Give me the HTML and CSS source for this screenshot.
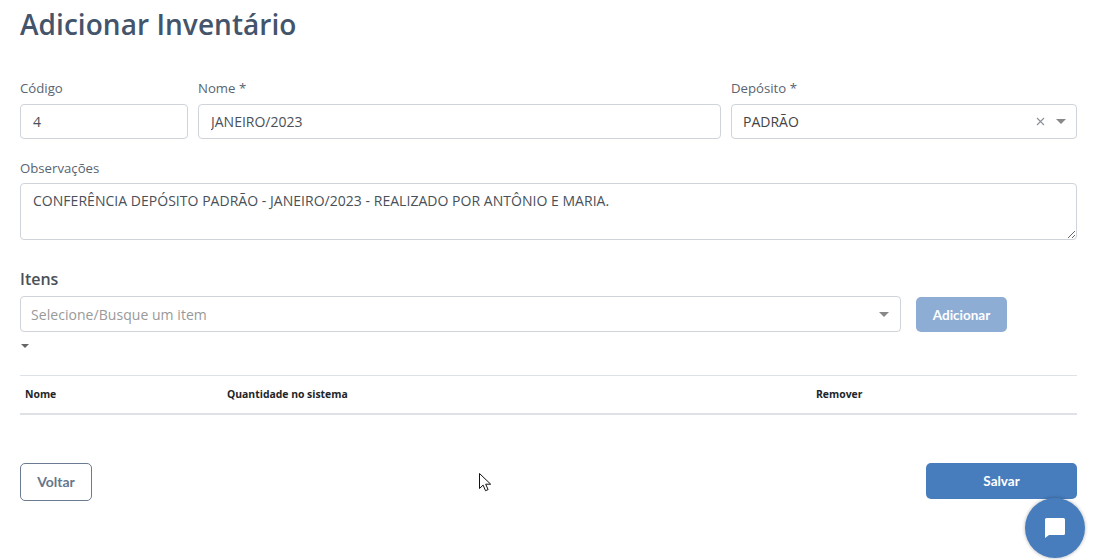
FILE: index.html
```html
<!DOCTYPE html>
<html lang="pt-BR">
<head>
  <meta charset="UTF-8" />
  <title>Adicionar Inventário</title>
  <link rel="stylesheet" href="styles.css">
</head>
<body>
  <main class="container">
    <h1>Adicionar Inventário</h1>

    <div class="form-row">
      <div class="field field-code">
        <label>Código</label>
        <input class="input" type="text" value="4">
      </div>
      <div class="field field-name">
        <label>Nome *</label>
        <input class="input" type="text" value="JANEIRO/2023">
      </div>
      <div class="field field-depot">
        <label>Depósito *</label>
        <div class="select">
          <span class="select-value">PADRÃO</span>
          <svg class="clear-icon" width="9" height="9" viewBox="0 0 9 9"><path d="M1 1l7 7M8 1l-7 7" stroke="#8a9097" stroke-width="1.1" fill="none"/></svg>
          <span class="caret"></span>
        </div>
      </div>
    </div>

    <div class="field field-notes">
      <label>Observações</label>
      <textarea class="input textarea">CONFERÊNCIA DEPÓSITO PADRÃO - JANEIRO/2023 - REALIZADO POR ANTÔNIO E MARIA.</textarea>
    </div>

    <h2>Itens</h2>
    <div class="item-row">
      <div class="select select-item">
        <span class="select-placeholder">Selecione/Busque um item</span>
        <span class="caret"></span>
      </div>
      <button class="btn btn-add">Adicionar</button>
    </div>
    <div class="stray-caret"><span class="caret"></span></div>

    <table class="items">
      <thead>
        <tr>
          <th class="col-name">Nome</th>
          <th class="col-qty">Quantidade no sistema</th>
          <th>Remover</th>
        </tr>
      </thead>
    </table>

    <div class="actions">
      <button class="btn btn-back">Voltar</button>
      <button class="btn btn-save">Salvar</button>
    </div>
  </main>

  <svg class="cursor" width="14" height="21" viewBox="0 0 14 21"><path d="M1.5 1.5v15l3.600-3.400 2.400 5.600 2.600-1.100-2.400-5.400h5z" fill="#fff" stroke="#111" stroke-width="1"/></svg>

  <button class="chat">
    <svg width="20" height="20" viewBox="0 0 20 20"><path d="M1.500 0h17a1.500 1.500 0 0 1 1.500 1.500v14a1.500 1.500 0 0 1-1.500 1.500H4l-4 3V1.500A1.500 1.500 0 0 1 1.500 0z" fill="#fff"/></svg>
  </button>
</body>
</html>
```

FILE: styles.css
```css
* {
  box-sizing: border-box;
  margin: 0;
  padding: 0;
}
html, body {
  height: 560px;
  overflow: hidden;
}
body {
  font-family: 'Open Sans', sans-serif;
  background: white;
  color: #495057;
  position: relative;
}
.container {
  padding: 0 18px 0 20px;
}
h1 {
  font-size: 28px;
  font-weight: 600;
  line-height: 38px;
  letter-spacing: 0.05px;
  color: #44546a;
  padding-top: 5px;
  margin-bottom: 35px;
}
h2 {
  font-size: 16px;
  font-weight: 600;
  line-height: 22px;
  color: #495057;
  margin-top: 28px;
  margin-bottom: 6px;
}
label {
  display: block;
  font-size: 13.200px;
  line-height: 20px;
  margin-bottom: 6px;
  color: #5a6470;
}
.form-row {
  display: flex;
  gap: 10px;
}
.field-code {
  width: 168px;
}
.field-name {
  width: 523px;
}
.field-depot {
  width: 346px;
}
.field-notes {
  margin-top: 19px;
}
.field-notes label {
  margin-bottom: 5px;
}
.input {
  display: block;
  width: 100%;
  height: 35px;
  padding: 0 12px;
  border: 1px solid #ced4da;
  border-radius: 4px;
  font-family: inherit;
  font-size: 14px;
  color: #495057;
  background: white;
}
.textarea {
  height: 57px;
  padding: 7px 12px;
  line-height: 20px;
  letter-spacing: 0.03px;
  resize: vertical;
}
.select {
  display: flex;
  align-items: center;
  height: 35px;
  padding: 0 10px 0 11px;
  border: 1px solid #ced4da;
  border-radius: 4px;
  font-size: 14px;
  color: #444;
}
.select-value {
  flex: 1;
}
.clear-icon {
  margin-right: 11px;
}
.caret {
  display: block;
  width: 0;
  height: 0;
  border-left: 5px solid transparent;
  border-right: 5px solid transparent;
  border-top: 5px solid #888;
}
.item-row {
  display: flex;
  align-items: flex-end;
  gap: 15px;
}
.select-item {
  width: 881px;
  height: 36px;
  padding-left: 10px;
  padding-right: 11px;
}
.select-placeholder {
  flex: 1;
  letter-spacing: 0.05px;
  color: #999;
}
.btn {
  font-family: 'Lato', sans-serif;
  font-size: 13.500px;
  font-weight: 700;
  border-radius: 5px;
  cursor: pointer;
}
.btn-add {
  width: 91px;
  height: 35px;
  background: #8dadd5;
  border: none;
  color: white;
}
.stray-caret {
  height: 43px;
  padding: 12px 0 0 1px;
}
.stray-caret .caret {
  border-left-width: 4px;
  border-right-width: 4px;
  border-top-width: 4px;
  border-top-color: #666;
}
.items {
  width: 100%;
  border-collapse: collapse;
  table-layout: fixed;
}
.items th {
  height: 38px;
  padding: 0 5px 1px;
  font-size: 10.400px;
  font-weight: 700;
  text-align: left;
  color: #212529;
  border-top: 1px solid #dee2e6;
  border-bottom: 2px solid #dee2e6;
}
.col-name {
  width: 202px;
}
.col-qty {
  width: 589px;
}
.actions {
  display: flex;
  justify-content: space-between;
  align-items: flex-start;
  margin-top: 48px;
}
.btn-back {
  width: 72px;
  height: 38px;
  font-size: 14px;
  background: white;
  border: 1px solid #6b7b92;
  color: #66768c;
}
.btn-save {
  width: 151px;
  height: 36px;
  background: #477dbc;
  border: none;
  color: white;
}
.cursor {
  position: absolute;
  left: 478px;
  top: 472px;
}
.chat {
  position: absolute;
  left: 1025px;
  top: 498px;
  width: 60px;
  height: 60px;
  display: flex;
  align-items: center;
  justify-content: center;
  background: #477dbc;
  border: none;
  border-radius: 50%;
  box-shadow: 0 0 3px 1px rgba(0,0,0,0.18);
}
```
